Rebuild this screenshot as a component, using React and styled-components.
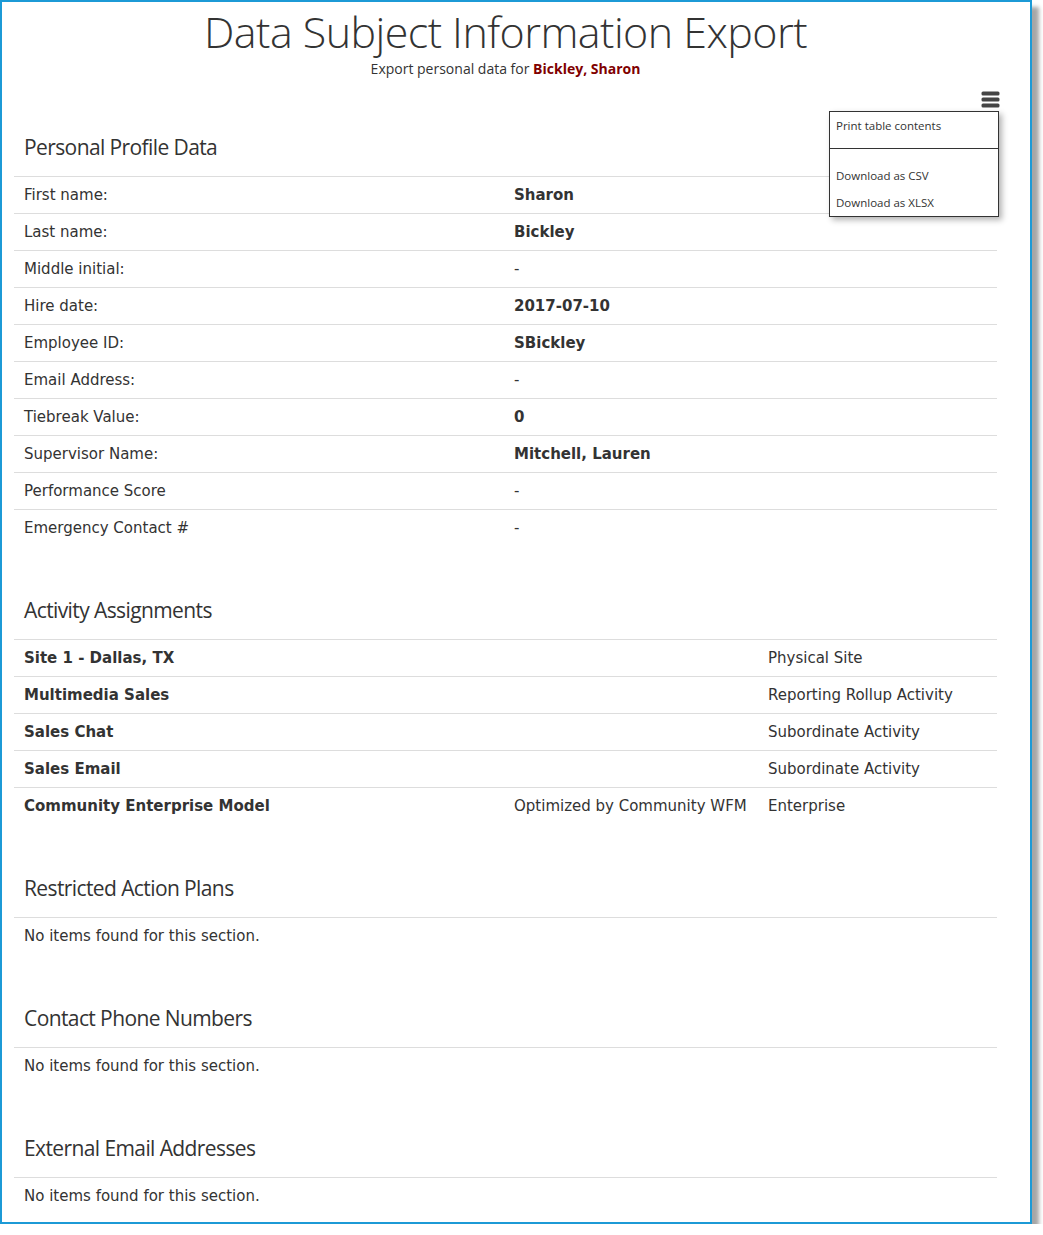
import React from "react";
import styled, { createGlobalStyle } from "styled-components";

const Global = createGlobalStyle`
  html, body { margin: 0; padding: 0; background: #fff; }
  body { font-family: "DejaVu Sans", Verdana, sans-serif; color: #333; }
`;

const Frame = styled.div`
  box-sizing: border-box;
  width: 1032px;
  border: 2px solid #1c9ad6;
  box-shadow: 7px 7px 4px rgba(0, 0, 0, 0.35);
  background: #fff;
  padding: 0 33px 8px 12px;
`;

const Header = styled.header`
  text-align: center;
  padding-top: 6px;
`;

const Title = styled.h1`
  margin: 0;
  font-family: "Open Sans", sans-serif;
  font-weight: 300;
  font-size: 43px;
  line-height: 48px;
  color: #333;
  letter-spacing: -0.55px;
`;

const Subtitle = styled.div`
  font-family: "Open Sans", sans-serif;
  font-size: 14px;
  line-height: 16px;
  color: #333;
  margin: 5px 0 2px;
`;

const Name = styled.strong`
  color: #800000;
  font-weight: 700;
`;

const Toolbar = styled.div`
  position: relative;
  display: flex;
  justify-content: flex-end;
  height: 24px;
  margin-top: 11px;
  margin-right: -3px;
`;

const MenuButton = styled.button`
  border: 0;
  background: none;
  padding: 2px 0 0;
  width: 19px;
  height: 24px;
  cursor: pointer;
  display: block;
`;

const Menu = styled.div`
  position: absolute;
  right: 1px;
  top: 23px;
  width: 170px;
  box-sizing: border-box;
  background: #fff;
  border: 1px solid #333;
  box-shadow: 3px 3px 6px rgba(0, 0, 0, 0.3);
  font-family: "Open Sans", sans-serif;
  font-size: 11.5px;
  color: #333;
  z-index: 2;
`;

const MenuItem = styled.div`
  padding: 0 6px;
  line-height: 27px;
`;

const MenuTop = styled(MenuItem)`
  padding-top: 1px;
  height: 37px;
  border-bottom: 1px solid #333;
  box-sizing: border-box;
  line-height: 25px;
`;

const MenuSpacer = styled.div`
  height: 13px;
`;

const Section = styled.section`
  margin-top: ${(p) => (p.$first ? "20px" : "49px")};
`;

const Heading = styled.h2`
  margin: 0 0 14px;
  padding: 0 10px;
  font-family: "Open Sans", sans-serif;
  font-weight: 400;
  font-size: 21px;
  line-height: 30px;
  color: #333;
  letter-spacing: -0.6px;
`;

const Row = styled.div`
  display: grid;
  grid-template-columns: ${(p) => p.$cols};
  border-top: 1px solid #ddd;
`;

const Cell = styled.div`
  padding: 8px 10px 8px;
  font-size: 15px;
  line-height: 20px;
  font-weight: ${(p) => (p.$bold ? 700 : 400)};
  white-space: nowrap;
`;

const HamburgerIcon = () => (
  <svg width="19" height="17" viewBox="0 0 19 17">
    <rect x="0.5" y="0.5" width="18" height="4" rx="1.5" fill="#444" />
    <rect x="0.5" y="6.5" width="18" height="4" rx="1.5" fill="#444" />
    <rect x="0.5" y="12.5" width="18" height="4" rx="1.5" fill="#444" />
  </svg>
);

const profile = [
  ["First name:", "Sharon"],
  ["Last name:", "Bickley"],
  ["Middle initial:", "-"],
  ["Hire date:", "2017-07-10"],
  ["Employee ID:", "SBickley"],
  ["Email Address:", "-"],
  ["Tiebreak Value:", "0"],
  ["Supervisor Name:", "Mitchell, Lauren"],
  ["Performance Score", "-"],
  ["Emergency Contact #", "-"],
];

const activities = [
  ["Site 1 - Dallas, TX", "", "Physical Site"],
  ["Multimedia Sales", "", "Reporting Rollup Activity"],
  ["Sales Chat", "", "Subordinate Activity"],
  ["Sales Email", "", "Subordinate Activity"],
  ["Community Enterprise Model", "Optimized by Community WFM", "Enterprise"],
];

const emptySections = [
  "Restricted Action Plans",
  "Contact Phone Numbers",
  "External Email Addresses",
];

export default function App() {
  return (
    <>
      <Global />
      <Frame>
        <Header>
          <Title>Data Subject Information Export</Title>
          <Subtitle>
            Export personal data for <Name>Bickley, Sharon</Name>
          </Subtitle>
        </Header>
        <Toolbar>
          <MenuButton aria-label="Table menu">
            <HamburgerIcon />
          </MenuButton>
          <Menu>
            <MenuTop>Print table contents</MenuTop>
            <MenuSpacer />
            <MenuItem>Download as CSV</MenuItem>
            <MenuItem>Download as XLSX</MenuItem>
          </Menu>
        </Toolbar>

        <Section $first>
          <Heading>Personal Profile Data</Heading>
          {profile.map(([label, value]) => (
            <Row key={label} $cols="490px 1fr">
              <Cell>{label}</Cell>
              <Cell $bold={value !== "-"}>{value}</Cell>
            </Row>
          ))}
        </Section>

        <Section>
          <Heading>Activity Assignments</Heading>
          {activities.map(([name, note, type]) => (
            <Row key={name} $cols="490px 254px 1fr">
              <Cell $bold>{name}</Cell>
              <Cell>{note}</Cell>
              <Cell>{type}</Cell>
            </Row>
          ))}
        </Section>

        {emptySections.map((title) => (
          <Section key={title}>
            <Heading>{title}</Heading>
            <Row $cols="1fr">
              <Cell>No items found for this section.</Cell>
            </Row>
          </Section>
        ))}
      </Frame>
    </>
  );
}
